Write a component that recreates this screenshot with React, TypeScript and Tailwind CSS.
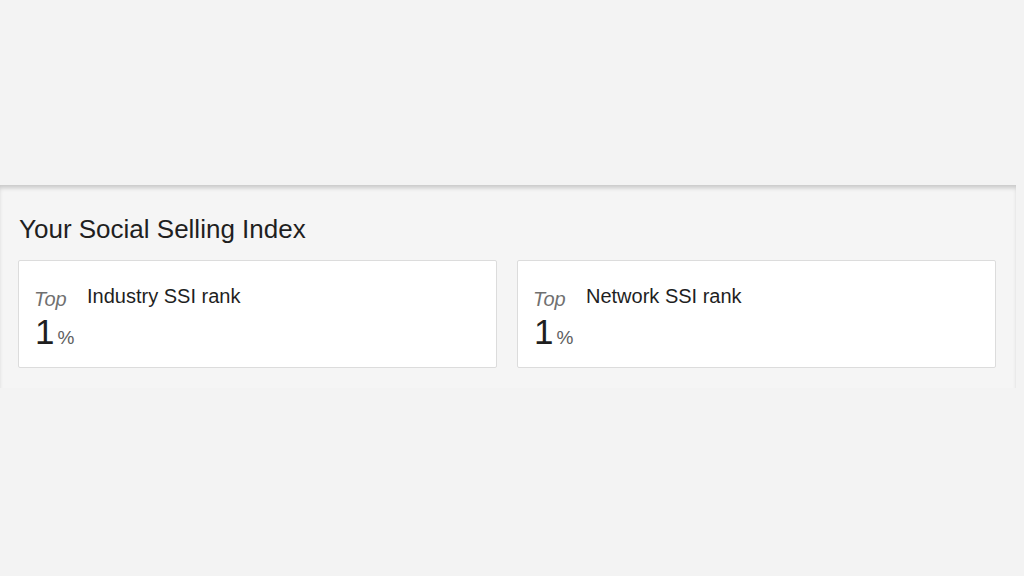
import React from "react";

function Card({ title }: { title: string }) {
  return (
    <div className="flex-1 h-[108px] bg-white border border-[#dcdcdc] rounded-[2px] flex pl-[15px] pt-[23px]">
      <div className="w-[53px] flex flex-col">
        <span className="italic text-[20px] leading-[24px] text-[#707070] mt-[3px]">Top</span>
        <div className="flex items-baseline mt-[3px] ml-[1px]">
          <span className="text-[35px] leading-[36px] text-[#1f1f1f] tracking-[-1px]">1</span>
          <span className="text-[19px] text-[#606060] ml-[4px]">%</span>
        </div>
      </div>
      <span className="text-[20px] leading-[24px] text-[#1f1f1f]">{title}</span>
    </div>
  );
}

export default function App() {
  return (
    <div className="w-[1024px] h-[576px] bg-[#f3f3f3] overflow-hidden" style={{ fontFamily: '"Liberation Sans", Arial, sans-serif' }}>
      <div className="h-[185px]" />
      <div className="w-[1016px] bg-[#f5f5f5] shadow-[inset_0_4px_4px_-1px_rgba(0,0,0,0.18)] pl-[18px] pr-[20px] pt-[28px] pb-[20px]">
        <h2 className="text-[26px] leading-[32px] text-[#1f1f1f] ml-[1px] mb-[15px]">Your Social Selling Index</h2>
        <div className="flex gap-[20px]">
          <Card title="Industry SSI rank" />
          <Card title="Network SSI rank" />
        </div>
      </div>
    </div>
  );
}
